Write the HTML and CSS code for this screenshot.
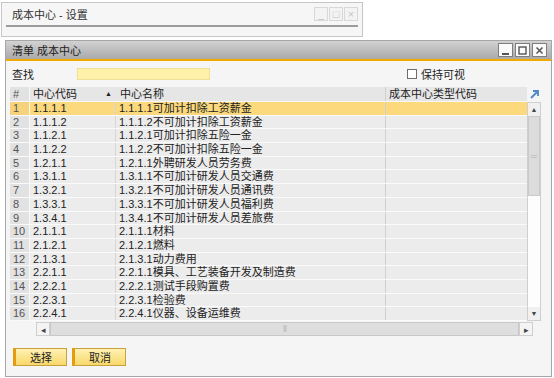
FILE: index.html
```html
<!DOCTYPE html>
<html>
<head>
    <title>成本中心</title>
    <link rel="stylesheet" href="styles.css">
</head>
<body>
    <div class="back-window">
        <div class="back-title">
            <span>成本中心 - 设置</span>
            <div class="back-buttons">
                <span class="wbtn-light">_</span>
                <span class="wbtn-light">□</span>
                <span class="wbtn-light">×</span>
            </div>
        </div>
    </div>

    <div class="main-window">
        <div class="title-bar">
            <span>清单 成本中心</span>
            <div class="win-buttons">
                <span class="wbtn"><svg width="9" height="9" viewBox="0 0 9 9"><rect x="1" y="7" width="7" height="2" fill="#555"/></svg></span>
                <span class="wbtn"><svg width="9" height="9" viewBox="0 0 9 9"><rect x="1" y="1" width="7" height="7" fill="none" stroke="#555" stroke-width="1.4"/></svg></span>
                <span class="wbtn"><svg width="9" height="9" viewBox="0 0 9 9"><path d="M1.5 1.5 L7.5 7.5 M7.5 1.5 L1.5 7.5" stroke="#555" stroke-width="1.5"/></svg></span>
            </div>
        </div>

        <div class="content">
            <div class="search-row">
                <label class="search-label">查找</label>
                <div class="search-input"></div>
                <div class="keep-visible">
                    <span class="checkbox"></span>
                    <span>保持可视</span>
                </div>
            </div>

            <div class="grid-wrap">
                <div class="grid-main">
                    <div class="row header">
                        <div class="c-num">#</div>
                        <div class="c-code">中心代码<span class="sort">▲</span></div>
                        <div class="c-name">中心名称</div>
                        <div class="c-type">成本中心类型代码</div>
                    </div>
                    <div class="row selected"><div class="c-num">1</div><div class="c-code">1.1.1.1</div><div class="c-name">1.1.1.1可加计扣除工资薪金</div><div class="c-type"></div></div>
                    <div class="row"><div class="c-num">2</div><div class="c-code">1.1.1.2</div><div class="c-name">1.1.1.2不可加计扣除工资薪金</div><div class="c-type"></div></div>
                    <div class="row"><div class="c-num">3</div><div class="c-code">1.1.2.1</div><div class="c-name">1.1.2.1可加计扣除五险一金</div><div class="c-type"></div></div>
                    <div class="row"><div class="c-num">4</div><div class="c-code">1.1.2.2</div><div class="c-name">1.1.2.2不可加计扣除五险一金</div><div class="c-type"></div></div>
                    <div class="row"><div class="c-num">5</div><div class="c-code">1.2.1.1</div><div class="c-name">1.2.1.1外聘研发人员劳务费</div><div class="c-type"></div></div>
                    <div class="row"><div class="c-num">6</div><div class="c-code">1.3.1.1</div><div class="c-name">1.3.1.1不可加计研发人员交通费</div><div class="c-type"></div></div>
                    <div class="row"><div class="c-num">7</div><div class="c-code">1.3.2.1</div><div class="c-name">1.3.2.1不可加计研发人员通讯费</div><div class="c-type"></div></div>
                    <div class="row"><div class="c-num">8</div><div class="c-code">1.3.3.1</div><div class="c-name">1.3.3.1不可加计研发人员福利费</div><div class="c-type"></div></div>
                    <div class="row"><div class="c-num">9</div><div class="c-code">1.3.4.1</div><div class="c-name">1.3.4.1不可加计研发人员差旅费</div><div class="c-type"></div></div>
                    <div class="row"><div class="c-num">10</div><div class="c-code">2.1.1.1</div><div class="c-name">2.1.1.1材料</div><div class="c-type"></div></div>
                    <div class="row"><div class="c-num">11</div><div class="c-code">2.1.2.1</div><div class="c-name">2.1.2.1燃料</div><div class="c-type"></div></div>
                    <div class="row"><div class="c-num">12</div><div class="c-code">2.1.3.1</div><div class="c-name">2.1.3.1动力费用</div><div class="c-type"></div></div>
                    <div class="row"><div class="c-num">13</div><div class="c-code">2.2.1.1</div><div class="c-name">2.2.1.1模具、工艺装备开发及制造费</div><div class="c-type"></div></div>
                    <div class="row"><div class="c-num">14</div><div class="c-code">2.2.2.1</div><div class="c-name">2.2.2.1测试手段购置费</div><div class="c-type"></div></div>
                    <div class="row"><div class="c-num">15</div><div class="c-code">2.2.3.1</div><div class="c-name">2.2.3.1检验费</div><div class="c-type"></div></div>
                    <div class="row"><div class="c-num">16</div><div class="c-code">2.2.4.1</div><div class="c-name">2.2.4.1仪器、设备运维费</div><div class="c-type"></div></div>
                </div>

                <div class="vscroll">
                    <div class="expand">
                        <svg width="11" height="11" viewBox="0 0 11 11"><path d="M2 9 L8.5 2.5 M4 2 L9 2 L9 7" fill="none" stroke="#4f86c6" stroke-width="1.8"/></svg>
                    </div>
                    <div class="vs-body">
                        <div class="sb-btn">▲</div>
                        <div class="vs-thumb"><span class="grip-h">═</span></div>
                        <div class="vs-track"></div>
                        <div class="sb-btn">▼</div>
                    </div>
                </div>
            </div>

            <div class="hscroll">
                <div class="sb-btn small">◂</div>
                <div class="hs-thumb"><span class="grip-v">⦀</span></div>
                <div class="sb-btn small">▸</div>
            </div>

            <div class="actions">
                <button type="button" class="btn">选择</button>
                <button type="button" class="btn">取消</button>
            </div>
        </div>
    </div>
</body>
</html>
```

FILE: styles.css
```css
body {
    margin: 0;
    background: #ffffff;
    font-family: "Liberation Sans", "Noto Sans CJK SC", sans-serif;
    font-size: 11px;
    color: #222;
}

.back-window {
    margin: 2px 0 0 1px;
    width: 362px;
    height: 35px;
    border: 1px solid #c6c6c6;
    background: #f6f6f6;
    box-sizing: border-box;
}

.back-title {
    height: 22px;
    border-bottom: 2px solid #9c9c9c;
    margin: 0 4px;
    display: flex;
    align-items: center;
    justify-content: space-between;
    padding-left: 6px;
    color: #333;
}

.back-buttons {
    display: flex;
    gap: 1px;
}

.wbtn-light {
    width: 14px;
    height: 14px;
    border: 1px solid #d8d8d8;
    background: #f3f3f3;
    color: #c4c4c4;
    font-size: 11px;
    line-height: 13px;
    text-align: center;
    box-sizing: border-box;
}

.main-window {
    margin: 3px 0 0 5px;
    width: 547px;
    height: 337px;
    border: 1px solid #a6a6a6;
    background: #f5f5f5;
    box-sizing: border-box;
}

.title-bar {
    height: 18px;
    background: linear-gradient(to bottom, #d2d2d2, #a9a9a9);
    border-bottom: 2px solid #f2a900;
    display: flex;
    align-items: center;
    justify-content: space-between;
    padding: 0 4px 0 6px;
    color: #222;
}

.win-buttons {
    display: flex;
    gap: 2px;
}

.wbtn {
    width: 15px;
    height: 14px;
    background: #fafafa;
    border: 1px solid #7e7e7e;
    box-sizing: border-box;
    display: flex;
    align-items: center;
    justify-content: center;
}

.content {
    padding: 6px 0 0 4px;
}

.search-row {
    display: flex;
    align-items: center;
    height: 14px;
}

.search-label {
    width: 65px;
    padding-left: 2px;
    color: #222;
}

.search-input {
    width: 133px;
    height: 12px;
    background: #fff2a8;
    border: 1px solid #eedf9b;
    box-sizing: border-box;
}

.keep-visible {
    margin-left: 197px;
    display: flex;
    align-items: center;
    gap: 4px;
}

.checkbox {
    width: 10px;
    height: 10px;
    border: 1px solid #6e6e6e;
    background: #fff;
    box-sizing: border-box;
}

.grid-wrap {
    margin-top: 6px;
    display: flex;
}

.grid-main {
    width: 517px;
}

.row {
    display: flex;
    height: 13.7px;
    line-height: 13px;
    background: #ececec;
    border-bottom: 1px solid #fafafa;
    box-sizing: border-box;
}

.row > div {
    padding-left: 3px;
    box-sizing: border-box;
    white-space: nowrap;
    overflow: hidden;
}

.row.header {
    height: 15px;
    background: #e6e6e6;
    border-bottom: 1px solid #f8f8f8;
    line-height: 14px;
}

.row.selected {
    background: #fbd97c;
}

.c-num {
    width: 20px;
    color: #555;
    background: #e2e2e2;
    border-right: 1px solid #f8f8f8;
}

.row.selected .c-num {
    background: #f6d27b;
}

.c-code {
    width: 85px;
}

.header .c-code {
    display: flex;
    justify-content: space-between;
    padding-right: 3px;
}

.c-name {
    width: 270px;
    border-left: 1px solid #d6d6d6;
}

.header .c-name {
    border-left: none;
    padding-left: 5px;
}

.c-type {
    width: 142px;
    border-left: 1px solid #d0d0d0;
}

.sort {
    font-size: 7px;
    line-height: 14px;
}

.vscroll {
    width: 14px;
    display: flex;
    flex-direction: column;
}

.expand {
    height: 15px;
    display: flex;
    align-items: center;
    justify-content: center;
}

.vs-body {
    height: 219px;
    display: flex;
    flex-direction: column;
    border: 1px solid #cfcfcf;
    background: #fdfdfd;
    box-sizing: border-box;
}

.sb-btn {
    height: 13px;
    font-size: 7px;
    line-height: 13px;
    text-align: center;
    color: #444;
    background: #f0f0f0;
}

.sb-btn.small {
    width: 14px;
    height: 14px;
    line-height: 14px;
    font-size: 9px;
    background: #f4f4f4;
    border: 1px solid #cfcfcf;
    box-sizing: border-box;
}

.vs-thumb {
    height: 78px;
    background: #dcdcdc;
    border: 1px solid #cacaca;
    display: flex;
    align-items: center;
    justify-content: center;
    color: #b6b6b6;
    font-size: 9px;
}

.vs-track {
    flex: 1;
}

.hscroll {
    display: flex;
    margin-left: 26px;
    width: 497px;
    height: 14px;
    margin-top: 1px;
}

.hs-thumb {
    flex: 1;
    background: #dedede;
    border: 1px solid #c8c8c8;
    box-sizing: border-box;
    display: flex;
    align-items: center;
    justify-content: center;
    color: #b6b6b6;
    font-size: 9px;
}

.actions {
    margin-top: 12px;
    display: flex;
    gap: 5px;
    padding-left: 3px;
}

.btn {
    width: 54px;
    height: 18px;
    border: 1px solid #c9a13c;
    border-left: 3px solid #e59b0b;
    background: linear-gradient(to bottom, #fff1b3, #f8d86a);
    font-family: "Liberation Sans", "Noto Sans CJK SC", sans-serif;
    font-size: 11px;
    color: #222;
    padding: 0;
    cursor: pointer;
}
```
